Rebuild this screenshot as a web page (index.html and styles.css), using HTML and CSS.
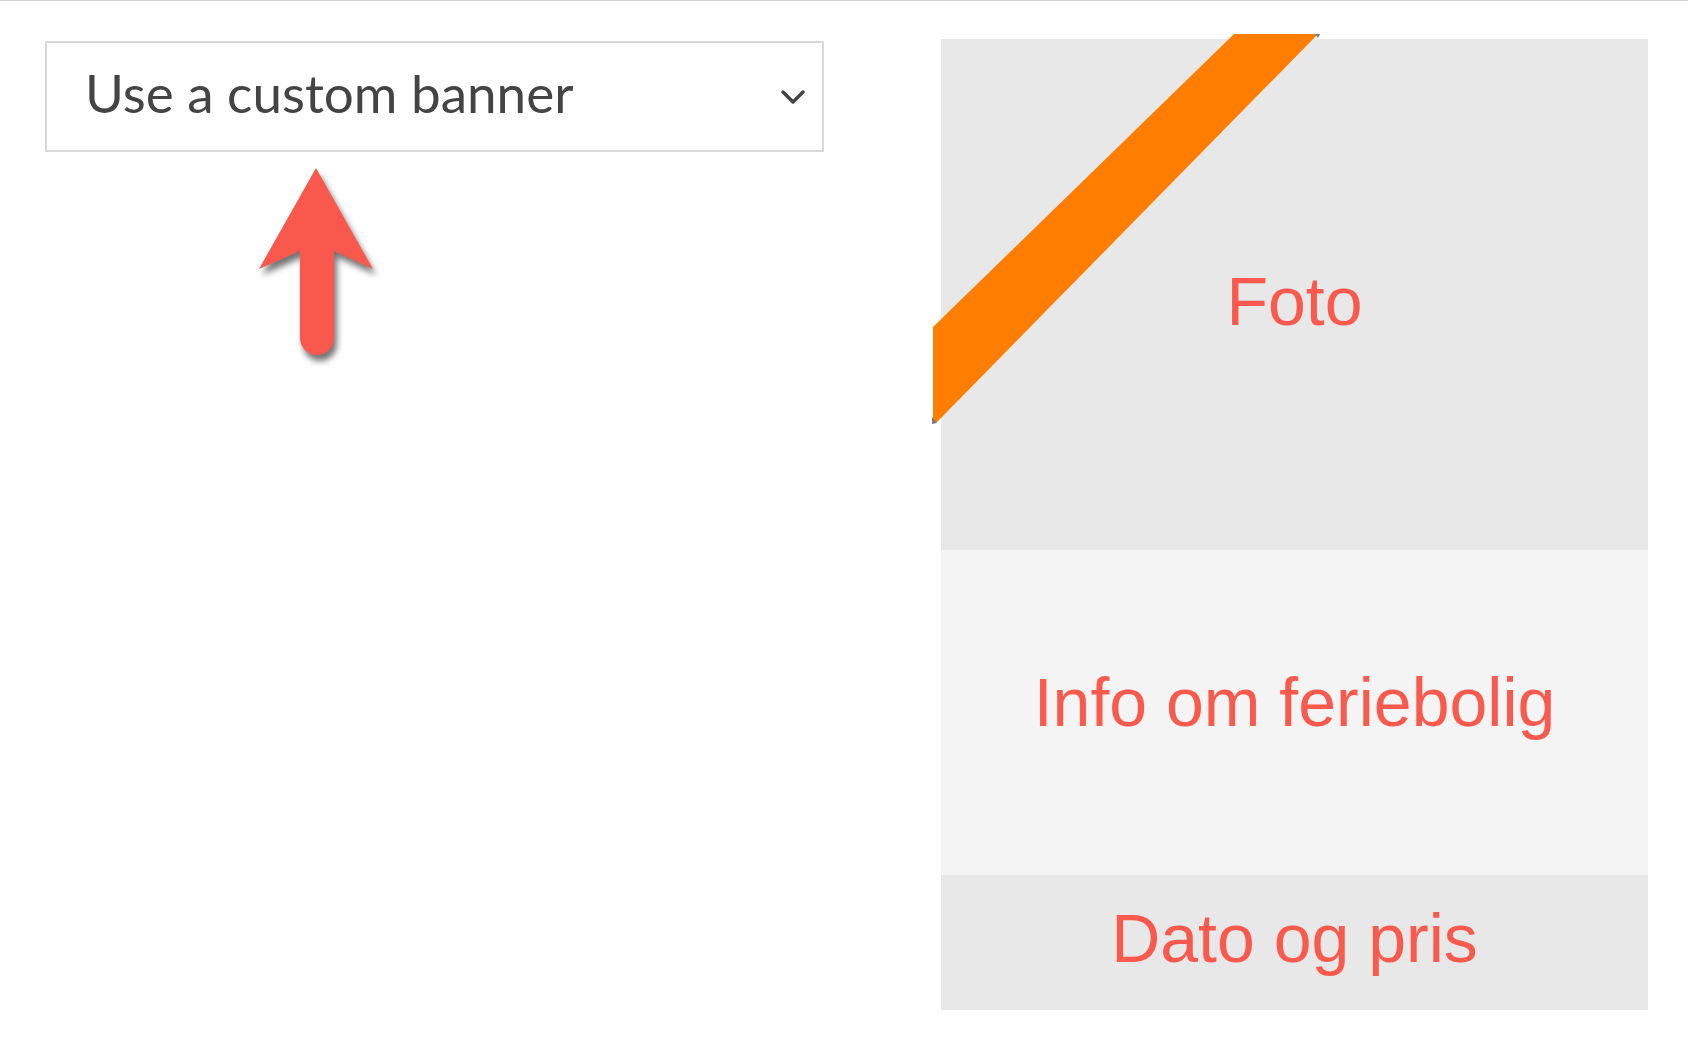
FILE: index.html
```html
<!DOCTYPE html>
<html>
<head>
  <title>Banner</title>
  <link rel="stylesheet" href="styles.css">
</head>
<body>
  <div class="page">
    <div class="settings">
      <div class="banner-select">
        <span class="banner-select-label">Use a custom banner</span>
        <svg class="chevron" viewBox="0 0 26 18">
          <polyline points="3,4 13,14 23,4" fill="none" stroke="#444" stroke-width="3.5" stroke-linecap="round" stroke-linejoin="round"/>
        </svg>
      </div>
      <!-- pijl onder het menu -->
      <svg class="hint-arrow" viewBox="0 0 130 200">
        <path d="M64 4 L121 105 L82 87 L82 174 A17 17 0 0 1 48 174 L48 87 L7 105 Z" fill="#f9594c"/>
      </svg>
    </div>

    <div class="preview">
      <div class="preview-block preview-photo">
        <svg class="ribbon" viewBox="0 0 390 392">
          <polygon points="302,0 386,0 4,389 1,389 1,293" fill="#ff7d00"/>
          <polygon points="0,383 5,389 0,390" fill="#7a7a7a"/>
          <polygon points="383,0 388,0 386,4" fill="#7a7a7a"/>
        </svg>
        <span>Foto</span>
      </div>
      <div class="preview-block preview-info">
        <span>Info om feriebolig</span>
      </div>
      <div class="preview-block preview-dates">
        <span>Dato og pris</span>
      </div>
    </div>
  </div>
</body>
</html>
```

FILE: styles.css
```css
body {
  margin: 0;
  border-top: 1px solid #cfcfcf;
  background: #fff;
  font-family: "Liberation Sans", Arial, sans-serif;
}

.page {
  display: flex;
  align-items: flex-start;
  gap: 117px;
  padding: 38px 0 0 45px;
}

.settings {
  width: 779px;
  display: flex;
  flex-direction: column;
}

.banner-select {
  margin-top: 2px;
  height: 111px;
  box-sizing: border-box;
  border: 2px solid #d9d9d9;
  display: flex;
  align-items: center;
  justify-content: space-between;
  padding: 0 16px 0 38px;
}

.banner-select-label {
  font-family: Lato, "Open Sans", sans-serif;
  font-size: 53px;
  color: #444;
  margin-bottom: 8px;
}

.chevron {
  width: 26px;
  height: 18px;
}

.hint-arrow {
  width: 130px;
  height: 200px;
  margin: 12px 0 0 207px;
  filter: drop-shadow(3px 6px 3px rgba(0, 0, 0, 0.55));
}

.preview {
  width: 707px;
  display: flex;
  flex-direction: column;
}

.preview-block {
  display: flex;
  align-items: center;
  justify-content: center;
  box-sizing: border-box;
  font-size: 68px;
  color: #f95a4d;
}

.preview-photo {
  position: relative;
  height: 511px;
  padding-top: 13px;
  background: #e8e8e8;
}

.ribbon {
  position: absolute;
  left: -9px;
  top: -5px;
  width: 390px;
  height: 392px;
}

.preview-info {
  height: 325px;
  padding-bottom: 21px;
  background: #f4f4f4;
}

.preview-dates {
  height: 135px;
  padding-bottom: 10px;
  background: #e8e8e8;
}
```
